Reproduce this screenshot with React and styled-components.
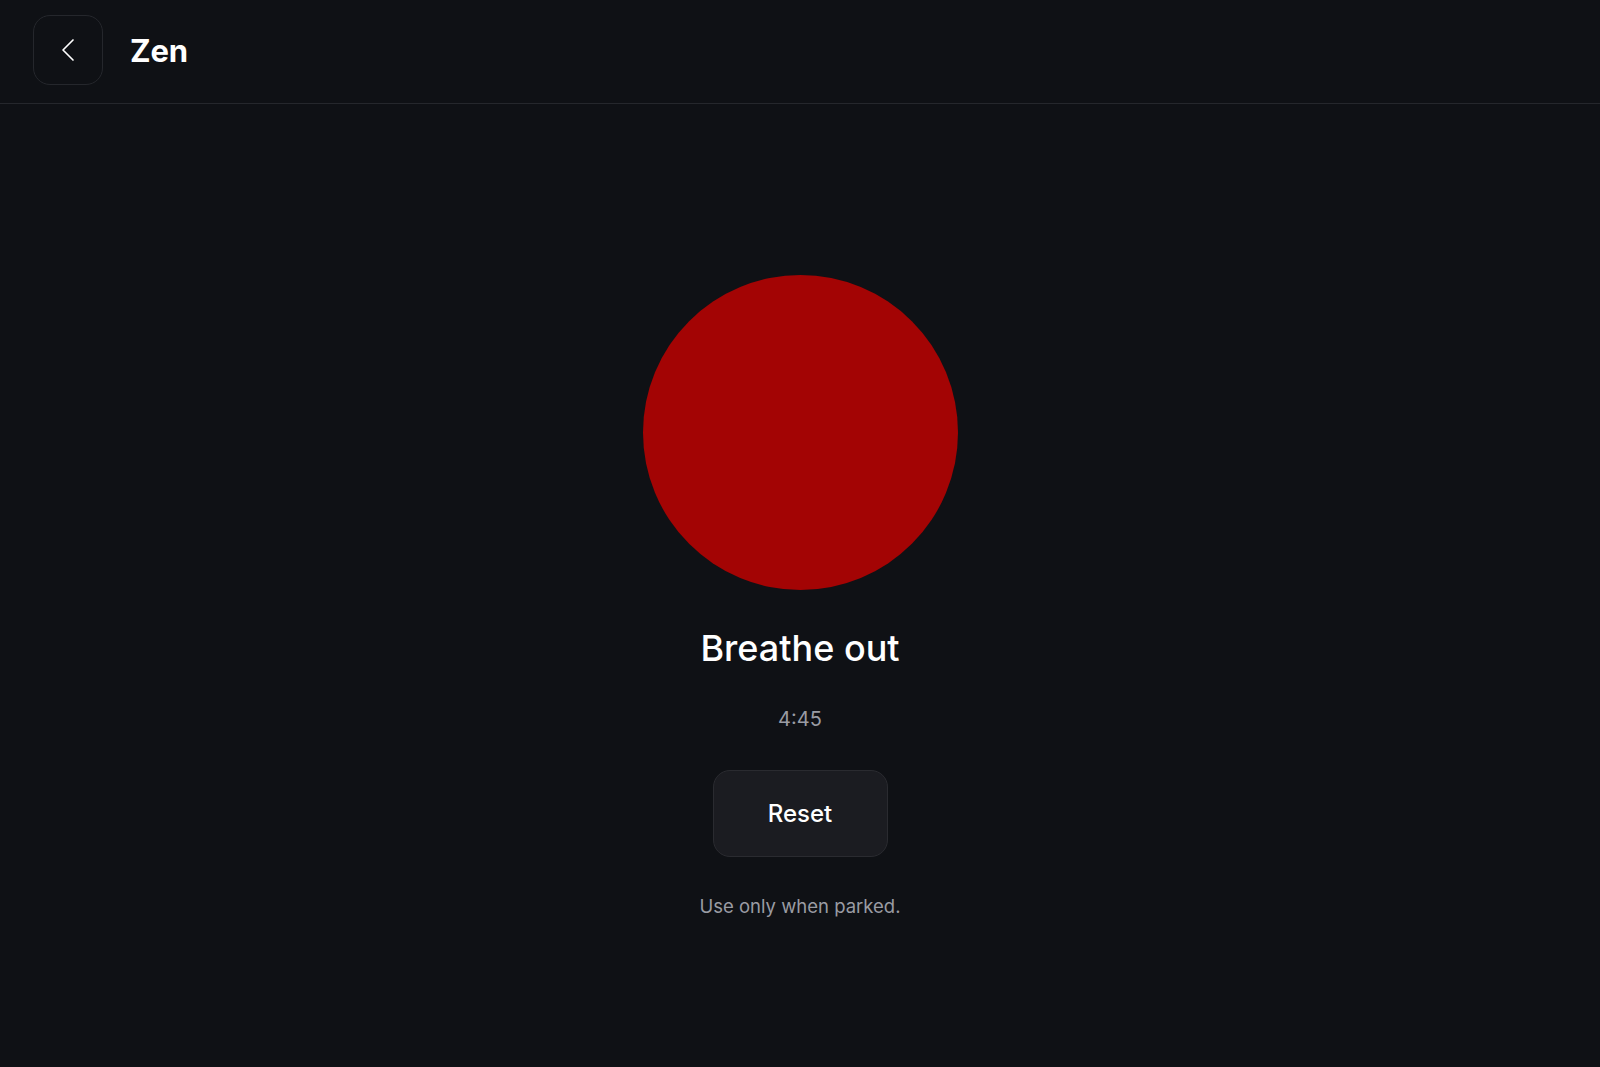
import React from 'react'
import styled, { createGlobalStyle } from 'styled-components'
import { ChevronLeft } from 'lucide-react'

const GlobalStyle = createGlobalStyle`
  html, body {
    margin: 0;
    padding: 0;
    background: #0f1115;
  }
  body {
    font-family: Inter, "Noto Sans", "Liberation Sans", sans-serif;
    color: #ffffff;
  }
  * { box-sizing: border-box; }
`

const Page = styled.div`
  min-height: 100vh;
  display: flex;
  flex-direction: column;
  background: #0f1115;
`

const Header = styled.header`
  display: flex;
  align-items: center;
  gap: 27px;
  padding: 15px 33px 18px;
  border-bottom: 1px solid #25272c;
`

const BackButton = styled.button`
  width: 70px;
  height: 70px;
  display: flex;
  align-items: center;
  justify-content: center;
  background: transparent;
  border: 1px solid #25272c;
  border-radius: 17px;
  color: #ffffff;
  padding: 0;
  cursor: pointer;
`

const Title = styled.h1`
  margin: 2px 0 0;
  font-size: 31px;
  font-weight: 700;
  line-height: 1.2;
  letter-spacing: -0.2px;
`

const Main = styled.main`
  flex: 1;
  display: flex;
  flex-direction: column;
  align-items: center;
  padding-top: 171px;
`

const Orb = styled.div`
  width: 315px;
  height: 315px;
  border-radius: 50%;
  background: #a30404;
`

const Phase = styled.h2`
  margin: 37px 0 0;
  font-size: 36px;
  font-weight: 500;
  line-height: 1.2;
`

const Timer = styled.div`
  margin-top: 37px;
  font-size: 20px;
  line-height: 1.2;
  color: #9a9ca3;
`

const ResetButton = styled.button`
  margin-top: 39px;
  width: 175px;
  height: 87px;
  background: #1b1c21;
  border: 1px solid #2a2b30;
  border-radius: 17px;
  color: #ffffff;
  font-family: inherit;
  font-size: 24px;
  font-weight: 500;
  cursor: pointer;
`

const Note = styled.p`
  margin: 38px 0 0;
  font-size: 18.5px;
  line-height: 1.2;
  color: #9a9ca3;
`

export default function App() {
  return (
    <Page>
      <GlobalStyle />
      <Header>
        <BackButton type="button" aria-label="Back">
          <ChevronLeft size={40} strokeWidth={1} />
        </BackButton>
        <Title>Zen</Title>
      </Header>
      <Main>
        <Orb />
        <Phase>Breathe out</Phase>
        <Timer>4:45</Timer>
        <ResetButton type="button">Reset</ResetButton>
        <Note>Use only when parked.</Note>
      </Main>
    </Page>
  )
}
